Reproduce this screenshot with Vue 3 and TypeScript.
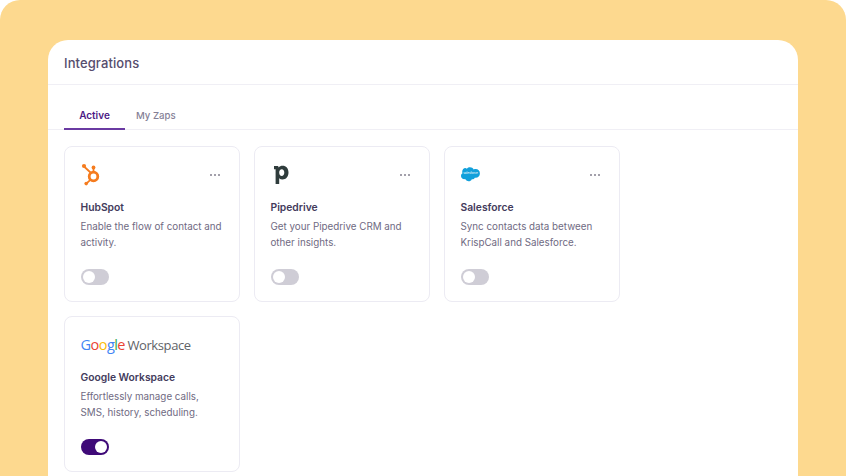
<script setup lang="ts">
interface Integration {
  name: string
  logo: 'hubspot' | 'pipedrive' | 'salesforce' | 'google'
  text: string[]
  on: boolean
}

const integrations: Integration[] = [
  { name: 'HubSpot', logo: 'hubspot', text: ['Enable the flow of contact and', 'activity.'], on: false },
  { name: 'Pipedrive', logo: 'pipedrive', text: ['Get your Pipedrive CRM and', 'other insights.'], on: false },
  { name: 'Salesforce', logo: 'salesforce', text: ['Sync contacts data between', 'KrispCall and Salesforce.'], on: false },
  { name: 'Google Workspace', logo: 'google', text: ['Effortlessly manage calls,', 'SMS, history, scheduling.'], on: true },
]

const googleLetters = [
  { ch: 'G', color: '#4285f4' },
  { ch: 'o', color: '#ea4335' },
  { ch: 'o', color: '#fbbc05' },
  { ch: 'g', color: '#4285f4' },
  { ch: 'l', color: '#34a853' },
  { ch: 'e', color: '#ea4335' },
]
</script>

<template>
  <div class="page">
    <section class="panel">
      <header class="panel__header">Integrations</header>
      <nav class="tabs">
        <span class="tab tab--active">Active</span>
        <span class="tab">My Zaps</span>
      </nav>
      <div class="grid">
        <article v-for="item in integrations" :key="item.name" class="card">
          <div class="card__top">
            <svg v-if="item.logo === 'hubspot'" class="logo" width="22" height="24" viewBox="0 0 22 24" fill="none">
              <circle cx="12.500" cy="13.500" r="4.300" stroke="#f57c1f" stroke-width="2.800" />
              <path d="M3 3.500 9.500 9.500M12.500 4.500V9M9.600 16.600 5.600 20.400" stroke="#f57c1f" stroke-width="1.800" />
              <circle cx="3" cy="3" r="2.100" fill="#f57c1f" />
              <circle cx="12.500" cy="4.400" r="1.900" fill="#f57c1f" />
              <circle cx="5.200" cy="20.600" r="1.800" fill="#f57c1f" />
            </svg>
            <svg v-else-if="item.logo === 'pipedrive'" class="logo" width="22" height="24" viewBox="0 0 22 24" fill="none">
              <path
                fill-rule="evenodd"
                fill="#2f3c3c"
                d="M3 3h4.200l.3 1.600C8.500 3.300 10 2.700 11.600 2.700c3.500 0 5.900 2.700 5.900 6.800 0 4.200-2.500 7-6 7-1.300 0-2.400-.4-3.300-1.200V21H4.600v-14.800L3 6.200V3Zm5.200 6.600c0 2 1 3.400 2.500 3.400s2.600-1.400 2.600-3.400-1-3.300-2.500-3.300c-1.600 0-2.600 1.300-2.600 3.300Z"
              />
            </svg>
            <svg v-else-if="item.logo === 'salesforce'" class="logo" width="22" height="24" viewBox="0 0 22 24">
              <path
                fill="#12a0db"
                d="M9 5.700c.8-.9 1.900-1.400 3.100-1.400 1.600 0 3 .9 3.700 2.200.6-.3 1.300-.4 2-.4 2.400 0 4.200 1.900 4.200 4.300s-1.800 4.300-4.200 4.300h-.9c-.6 1.100-1.700 1.700-3 1.500-.6 1.300-1.800 2.100-3.200 2.100-1.500 0-2.800-.9-3.300-2.200-.3.100-.6.100-.9.100C4.600 16.200 3.100 14.700 3.100 13c0-1.200.6-2.200 1.500-2.700-.2-.5-.3-1-.3-1.500 0-2.200 1.700-3.900 3-3.900.6 0 1.200.3 1.700.800Z"
                transform="translate(-3.100 0)"
              />
              <text x="9.500" y="11.400" text-anchor="middle" class="logo__sf">salesforce</text>
            </svg>
            <div v-else class="google">
              <span v-for="(letter, i) in googleLetters" :key="i" :style="{ color: letter.color }">{{ letter.ch }}</span>
              <span class="google__suffix">Workspace</span>
            </div>
            <span v-if="item.logo !== 'google'" class="dots"><i /><i /><i /></span>
          </div>
          <h3 class="card__name">{{ item.name }}</h3>
          <p class="card__text">
            <span v-for="line in item.text" :key="line">{{ line }}<br></span>
          </p>
          <span class="toggle" :class="{ 'toggle--on': item.on }"><span class="toggle__knob" /></span>
        </article>
      </div>
    </section>
  </div>
</template>

<style>
html,
body {
  margin: 0;
  background: #fff;
}
</style>

<style scoped>
.page {
  box-sizing: border-box;
  width: 846px;
  height: 476px;
  padding: 40px 48px 0;
  overflow: hidden;
  border-radius: 20px 20px 0 0;
  background: #fdd98f;
  font-family: Inter, "Noto Sans", sans-serif;
}

.panel {
  height: 436px;
  overflow: hidden;
  border-radius: 20px 20px 0 0;
  background: #fff;
}

.panel__header {
  box-sizing: border-box;
  height: 45px;
  padding: 14.500px 16px 0;
  border-bottom: 1px solid #f0eff5;
  color: #564d6d;
  font-size: 13px;
  font-weight: 500;
  line-height: 16px;
  letter-spacing: 0.1px;
}

.tabs {
  display: flex;
  box-sizing: border-box;
  height: 45px;
  padding: 0 16px;
  border-bottom: 1px solid #f0eff5;
}

.tab {
  box-sizing: border-box;
  height: 45px;
  padding: 24px 11px 0;
  color: #857f96;
  font-size: 9.600px;
  font-weight: 500;
  line-height: 14px;
}

.tab--active {
  width: 61px;
  padding: 23px 0 0;
  border-bottom: 2px solid #6a3aa2;
  color: #4c1a85;
  font-size: 10px;
  font-weight: 600;
  text-align: center;
}

.grid {
  display: grid;
  grid-template-columns: repeat(3, 176px);
  grid-auto-rows: 156px;
  gap: 14px;
  padding: 16px 16px 0;
}

.card {
  display: flex;
  box-sizing: border-box;
  flex-direction: column;
  padding: 16px 16px 16px 15.500px;
  border: 1px solid #ecebf3;
  border-radius: 8px;
  background: #fff;
}

.card__top {
  display: flex;
  align-items: center;
  justify-content: space-between;
  height: 24px;
}

.logo {
  display: block;
}

.logo__sf {
  fill: #fff;
  font-family: Inter, sans-serif;
  font-size: 3px;
}

.dots {
  display: flex;
  gap: 1.500px;
  margin-right: 3px;
}

.dots i {
  width: 2.500px;
  height: 2.500px;
  border-radius: 50%;
  background: #85808f;
}

.google {
  color: #5f6368;
  font-family: "Open Sans", sans-serif;
  font-size: 14.500px;
  font-weight: 500;
  line-height: 22px;
  letter-spacing: -0.55px;
  white-space: nowrap;
}

.google__suffix {
  margin-left: 2.500px;
  color: #5f6368;
  font-size: 13px;
  font-weight: 400;
  letter-spacing: -0.4px;
}

.card__name {
  margin: 12px 0 0;
  color: #433b5c;
  font-size: 10.300px;
  font-weight: 600;
  line-height: 16px;
}

.card__text {
  margin: 4px 0 0;
  color: #6f6a82;
  font-size: 9.800px;
  font-weight: 400;
  line-height: 16px;
  white-space: nowrap;
}

.toggle {
  display: flex;
  box-sizing: border-box;
  align-items: center;
  width: 28px;
  height: 16px;
  margin-top: auto;
  padding: 2px;
  border-radius: 8px;
  background: #cfcdd6;
}

.toggle__knob {
  width: 12px;
  height: 12px;
  border-radius: 50%;
  background: #fff;
}

.toggle--on {
  justify-content: flex-end;
  background: #3f0a78;
}
</style>
